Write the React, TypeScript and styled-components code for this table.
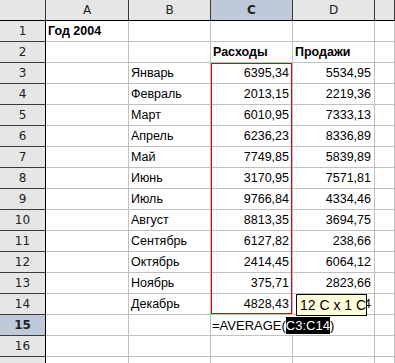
import styled, { createGlobalStyle } from "styled-components";

const GlobalStyle = createGlobalStyle`
  html, body {
    margin: 0;
    padding: 0;
    background: #ffffff;
    overflow: hidden;
  }
`;

const Sheet = styled.div`
  position: relative;
  display: grid;
  grid-template-columns: 46px 83px 82px 82px 82px 1fr;
  grid-auto-rows: 21px;
  width: 100%;
  height: 363px;
  overflow: hidden;
  font-family: "Liberation Sans", Arial, sans-serif;
  font-size: 12.5px;
  color: #000;
`;

const ColHead = styled.div<{ $active?: boolean }>`
  box-sizing: border-box;
  display: flex;
  align-items: center;
  justify-content: center;
  background: ${p => (p.$active ? "#bec9d9" : "#e6e6e6")};
  border-right: 1px solid #3a3a3a;
  border-bottom: 1px solid #000;
  font-family: "DejaVu Sans", sans-serif;
  font-size: 12px;
  font-weight: ${p => (p.$active ? 700 : 400)};
  color: #222;
`;

const RowHead = styled.div<{ $active?: boolean }>`
  box-sizing: border-box;
  display: flex;
  align-items: center;
  justify-content: center;
  background: ${p => (p.$active ? "#bec9d9" : "#e6e6e6")};
  border-right: 1px solid #000;
  border-bottom: 1px solid #3a3a3a;
  font-family: "DejaVu Sans", sans-serif;
  font-size: 12px;
  font-weight: ${p => (p.$active ? 700 : 400)};
  color: #222;
`;

const Cell = styled.div<{ $num?: boolean; $bold?: boolean }>`
  box-sizing: border-box;
  display: flex;
  align-items: flex-end;
  justify-content: ${p => (p.$num ? "flex-end" : "flex-start")};
  padding: 0 3px 2px 2px;
  line-height: 15px;
  border-right: 1px solid #c0c0c0;
  border-bottom: 1px solid #c0c0c0;
  font-weight: ${p => (p.$bold ? 700 : 400)};
  white-space: nowrap;
  overflow: visible;
`;

const EditCell = styled.div`
  grid-column: span 2;
  box-sizing: border-box;
  display: flex;
  align-items: center;
  padding: 1px 0 0 1px;
  border-right: 1px solid #c0c0c0;
  border-bottom: 1px solid #c0c0c0;
  font-size: 13px;
  white-space: nowrap;
`;

const RefMark = styled.span`
  background: #000;
  color: #fff;
  line-height: 17px;
`;

const Selection = styled.div`
  position: absolute;
  left: 211px;
  top: 63px;
  width: 81px;
  height: 251px;
  box-sizing: border-box;
  border: 1px solid #e00000;
  pointer-events: none;
`;

const Tip = styled.div`
  position: absolute;
  left: 296px;
  top: 294px;
  height: 22px;
  box-sizing: border-box;
  display: flex;
  align-items: center;
  padding: 0 0 0 3px;
  background: #ffffdc;
  border: 1px solid #000;
  font-size: 14px;
  white-space: nowrap;
`;

type Row = { a?: string; b?: string; c?: string; d?: string; bold?: boolean };

const rows: Row[] = [
  { a: "Год 2004", bold: true },
  { c: "Расходы", d: "Продажи", bold: true },
  { b: "Январь", c: "6395,34", d: "5534,95" },
  { b: "Февраль", c: "2013,15", d: "2219,36" },
  { b: "Март", c: "6010,95", d: "7333,13" },
  { b: "Апрель", c: "6236,23", d: "8336,89" },
  { b: "Май", c: "7749,85", d: "5839,89" },
  { b: "Июнь", c: "3170,95", d: "7571,81" },
  { b: "Июль", c: "9766,84", d: "4334,46" },
  { b: "Август", c: "8813,35", d: "3694,75" },
  { b: "Сентябрь", c: "6127,82", d: "238,66" },
  { b: "Октябрь", c: "2414,45", d: "6064,12" },
  { b: "Ноябрь", c: "375,71", d: "2823,66" },
  { b: "Декабрь", c: "4828,43", d: "4120,54" },
];

export default function App() {
  return (
    <>
      <GlobalStyle />
      <Sheet>
        <ColHead />
        <ColHead>A</ColHead>
        <ColHead>B</ColHead>
        <ColHead $active>C</ColHead>
        <ColHead>D</ColHead>
        <ColHead />

        {rows.map((r, i) => {
          const numeric = i > 1;
          return [
            <RowHead key={`h${i}`}>{i + 1}</RowHead>,
            <Cell key={`a${i}`} $bold={r.bold}>{r.a}</Cell>,
            <Cell key={`b${i}`}>{r.b}</Cell>,
            <Cell key={`c${i}`} $num={numeric} $bold={r.bold}>{r.c}</Cell>,
            <Cell key={`d${i}`} $num={numeric} $bold={r.bold}>{r.d}</Cell>,
            <Cell key={`e${i}`} />,
          ];
        })}

        <RowHead $active>15</RowHead>
        <Cell />
        <Cell />
        <EditCell>
          =AVERAGE(<RefMark>C3:C14</RefMark>)
        </EditCell>
        <Cell />

        <RowHead>16</RowHead>
        <Cell />
        <Cell />
        <Cell />
        <Cell />
        <Cell />

        <RowHead />
        <Cell />
        <Cell />
        <Cell />
        <Cell />
        <Cell />

        <Selection />
        <Tip>12 C x 1 C</Tip>
      </Sheet>
    </>
  );
}
